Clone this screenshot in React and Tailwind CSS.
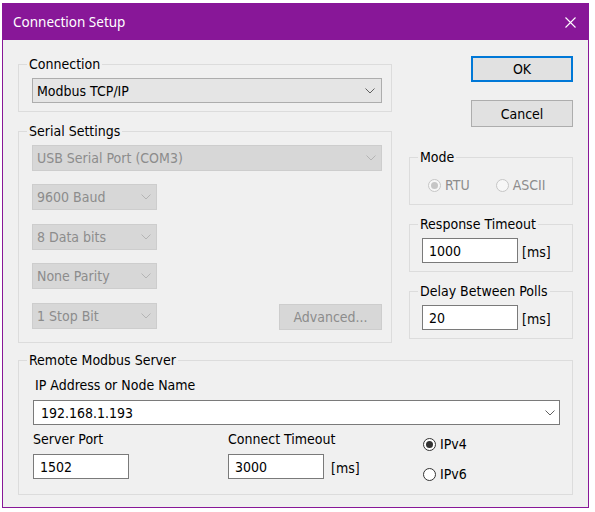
import React from "react";

const body = "font-['DejaVu_Sans_Condensed','DejaVu_Sans',sans-serif] font-stretch-condensed text-[14px] leading-[16px]";

function Chevron({ color }) {
  return (
    <svg width="10" height="6" viewBox="0 0 10 6" className="shrink-0">
      <polyline points="0.5,0.5 5,5 9.5,0.5" fill="none" stroke={color} strokeWidth="1" />
    </svg>
  );
}

// Windows-style group box: the caption sits in a gap of the top border
function Group({ title, className = "", innerClassName = "", children }) {
  return (
    <fieldset className={`border border-[#dcdcdc] ${className}`}>
      <legend className="ml-[8px] px-[2px] leading-[16px] text-black">{title}</legend>
      <div className={innerClassName}>{children}</div>
    </fieldset>
  );
}

function DisabledCombo({ label, className = "" }) {
  return (
    <div className={`h-[26px] flex items-center justify-between pl-[4px] pr-[5px] border border-[#cdcdcd] bg-[#d7d7d7] text-[#8c8c8c] ${className}`}>
      <span>{label}</span>
      <Chevron color="#b4b4b4" />
    </div>
  );
}

function Radio({ label, checked, disabled }) {
  return (
    <div className="h-[16px] flex items-center">
      <span
        className={
          disabled
            ? "w-[13px] h-[13px] rounded-full border border-[#c6c6c6] bg-[#f7f7f7] flex items-center justify-center"
            : "w-[13px] h-[13px] rounded-full border border-[#333333] bg-white flex items-center justify-center"
        }
      >
        {checked && (
          <span className={disabled ? "w-[7px] h-[7px] rounded-full bg-[#c6c6c6]" : "w-[7px] h-[7px] rounded-full bg-[#333333]"} />
        )}
      </span>
      <span className={disabled ? "ml-[4px] text-[#8c8c8c]" : "ml-[4px] text-black"}>{label}</span>
    </div>
  );
}

function MsInput({ value }) {
  return (
    <div className="flex items-center">
      <div className="w-[96px] h-[25px] border border-[#7a7a7a] bg-white flex items-center pl-[6px]">{value}</div>
      <span className="ml-[4px] mt-[2px]">[ms]</span>
    </div>
  );
}

export default function App() {
  return (
    <div className={`w-[595px] h-[512px] bg-white pt-[3px] pl-[2px] ${body}`}>
      <div className="w-[587px] h-[505px] border border-[#881798] bg-[#f0f0f0] flex flex-col">
        {/* title bar */}
        <div className="h-[36px] bg-[#881798] flex items-center justify-between pl-[10px] pr-[12px] shrink-0">
          <span className="font-['Noto_Sans',sans-serif] text-[13.5px] text-white leading-[18px]">Connection Setup</span>
          <svg width="11" height="11" viewBox="0 0 11 11">
            <path d="M0.5 0.5 L10.5 10.5 M10.5 0.5 L0.5 10.5" stroke="#ffffff" strokeWidth="1.1" />
          </svg>
        </div>

        {/* dialog body */}
        <div className="pl-[15px] pt-[16px] flex flex-col">
          <div className="flex items-start">
            {/* left column */}
            <div className="w-[374px] flex flex-col">
              <Group title="Connection" innerClassName="pl-[13px] pb-[8px]">
                <div className="mt-[6px] w-[350px] h-[25px] border border-[#adadad] bg-[#e5e5e5] flex items-center justify-between pl-[4px] pr-[6px]">
                  <span>Modbus TCP/IP</span>
                  <Chevron color="#606060" />
                </div>
              </Group>

              <Group title="Serial Settings" className="mt-[11px]" innerClassName="pl-[13px] pb-[12px]">
                <DisabledCombo label="USB Serial Port (COM3)" className="mt-[6px] w-[350px]" />
                <DisabledCombo label="9600 Baud" className="mt-[13px] w-[125px]" />
                <DisabledCombo label="8 Data bits" className="mt-[14px] w-[125px]" />
                <DisabledCombo label="None Parity" className="mt-[13px] w-[125px]" />
                <div className="mt-[14px] w-[350px] flex items-start justify-between">
                  <DisabledCombo label="1 Stop Bit" className="w-[125px]" />
                  <div className="mt-[1px] w-[103px] h-[26px] border border-[#cdcdcd] bg-[#d7d7d7] text-[#8c8c8c] flex items-center justify-center">
                    Advanced...
                  </div>
                </div>
              </Group>
            </div>

            {/* right column */}
            <div className="ml-[17px] w-[164px] flex flex-col">
              <div className="ml-auto w-[102px] h-[26px] border-2 border-[#0078d7] bg-[#e1e1e1] flex items-center justify-center">OK</div>
              <div className="mt-[18px] ml-auto w-[102px] h-[27px] border border-[#adadad] bg-[#e1e1e1] flex items-center justify-center">Cancel</div>

              <Group title="Mode" className="mt-[22px]" innerClassName="pl-[18px] pb-[11px]">
                <div className="mt-[12px] flex items-center gap-[26px]">
                  <Radio label="RTU" checked disabled />
                  <Radio label="ASCII" disabled />
                </div>
              </Group>

              <Group title="Response Timeout" className="mt-[11px]" innerClassName="pl-[12px] pb-[8px]">
                <div className="mt-[6px]">
                  <MsInput value="1000" />
                </div>
              </Group>

              <Group title="Delay Between Polls" className="mt-[11px]" innerClassName="pl-[12px] pb-[8px]">
                <div className="mt-[6px]">
                  <MsInput value="20" />
                </div>
              </Group>
            </div>
          </div>

          <Group title="Remote Modbus Server" className="mt-[9px] w-[555px]" innerClassName="pl-[14px] pb-[12px]">
            <div className="mt-[9px] ml-[2px]">IP Address or Node Name</div>
            <div className="mt-[7px] w-[527px] h-[25px] border border-[#7a7a7a] bg-white flex items-center justify-between pl-[7px] pr-[4px]">
              <span>192.168.1.193</span>
              <Chevron color="#606060" />
            </div>
            <div className="mt-[6px] flex items-start">
              <div className="w-[195px] flex flex-col">
                <span>Server Port</span>
                <div className="mt-[7px] w-[96px] h-[25px] border border-[#7a7a7a] bg-white flex items-center pl-[6px]">1502</div>
              </div>
              <div className="w-[195px] flex flex-col">
                <span>Connect Timeout</span>
                <div className="mt-[7px] flex items-center">
                  <div className="w-[96px] h-[25px] border border-[#7a7a7a] bg-white flex items-center pl-[6px]">3000</div>
                  <span className="ml-[7px] mt-[2px]">[ms]</span>
                </div>
              </div>
              <div className="flex flex-col mt-[5px] gap-[14px]">
                <Radio label="IPv4" checked />
                <Radio label="IPv6" />
              </div>
            </div>
          </Group>
        </div>
      </div>
    </div>
  );
}
